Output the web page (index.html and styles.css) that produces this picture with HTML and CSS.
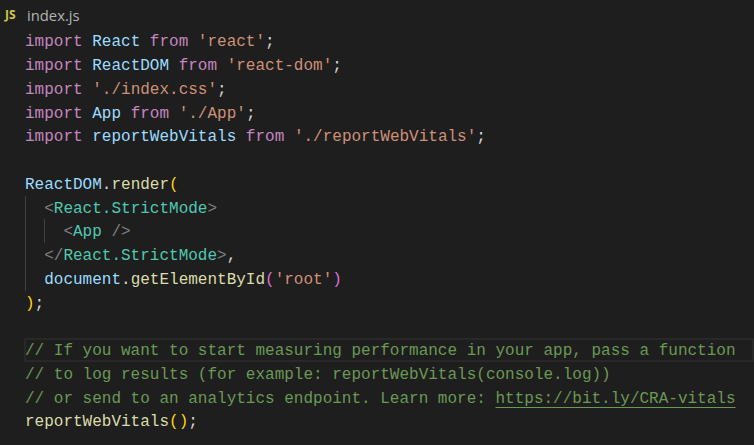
FILE: index.html
```html
<!DOCTYPE html>
<html lang="en">
<head>
<meta charset="utf-8">
<title>index.js</title>
<link rel="stylesheet" href="styles.css">
</head>
<body>
<div class="editor">
  <div class="tab"><span class="js">JS</span><span class="name">index.js</span></div>
  <div class="code">
    <div class="line"><span class="k">import</span> <span class="v">React</span> <span class="k">from</span> <span class="s">'react'</span><span class="p">;</span></div>
    <div class="line"><span class="k">import</span> <span class="v">ReactDOM</span> <span class="k">from</span> <span class="s">'react-dom'</span><span class="p">;</span></div>
    <div class="line"><span class="k">import</span> <span class="s">'./index.css'</span><span class="p">;</span></div>
    <div class="line"><span class="k">import</span> <span class="v">App</span> <span class="k">from</span> <span class="s">'./App'</span><span class="p">;</span></div>
    <div class="line"><span class="k">import</span> <span class="v">reportWebVitals</span> <span class="k">from</span> <span class="s">'./reportWebVitals'</span><span class="p">;</span></div>
    <div class="line"></div>
    <div class="line"><span class="v">ReactDOM</span><span class="p">.</span><span class="f">render</span><span class="y">(</span></div>
    <div class="line indent1">  <span class="g">&lt;</span><span class="t">React.StrictMode</span><span class="g">&gt;</span></div>
    <div class="line indent2">    <span class="g">&lt;</span><span class="t">App</span> <span class="g">/&gt;</span></div>
    <div class="line indent1">  <span class="g">&lt;/</span><span class="t">React.StrictMode</span><span class="g">&gt;</span><span class="p">,</span></div>
    <div class="line indent1">  <span class="v">document</span><span class="p">.</span><span class="f">getElementById</span><span class="m">(</span><span class="s">'root'</span><span class="m">)</span></div>
    <div class="line"><span class="y">)</span><span class="p">;</span></div>
    <div class="line"></div>
    <div class="line current"><span class="c">// If you want to start measuring performance in your app, pass a function</span></div>
    <div class="line"><span class="c">// to log results (for example: reportWebVitals(console.log))</span></div>
    <div class="line"><span class="c">// or send to an analytics endpoint. Learn more: <span class="link">https://bit.ly/CRA-vitals</span></span></div>
    <div class="line"><span class="f">reportWebVitals</span><span class="y">()</span><span class="p">;</span></div>
  </div>
</div>
</body>
</html>
```
FILE: styles.css
```css
html, body {
  margin: 0;
  padding: 0;
  background: #1e1e1e;
}
.editor {
  width: 754px;
  height: 445px;
  overflow: hidden;
  background: #1e1e1e;
}
.tab {
  display: flex;
  align-items: center;
  height: 29.25px;
  padding-left: 5px;
  box-sizing: border-box;
  font-family: "Open Sans", "Noto Sans", sans-serif;
  font-size: 14.8px;
}
.js {
  color: #cbcb41;
  font-weight: 700;
  font-size: 12px;
  width: 22px;
}
.name {
  color: #b4b4b4;
}
.code {
  padding-left: 25px;
  font-family: "Liberation Mono", monospace;
  font-size: 16px;
  line-height: 23.75px;
}
.line {
  box-sizing: border-box;
  height: 23.75px;
  padding-top: 2px;
  color: #d4d4d4;
  white-space: pre;
}
.indent1 {
  background: linear-gradient(#404040, #404040) 0 0 / 1px 100% no-repeat;
}
.indent2 {
  background:
    linear-gradient(#404040, #404040) 0 0 / 1px 100% no-repeat,
    linear-gradient(#404040, #404040) 19px 0 / 1px 100% no-repeat;
}
.current {
  margin-left: -1px;
  padding-left: 1px;
  box-shadow: inset 0 0 0 2px #282828;
}
.k { color: #c586c0; }
.v { color: #9cdcfe; }
.s { color: #ce9178; }
.p { color: #d4d4d4; }
.f { color: #dcdcaa; }
.y { color: #ffd700; }
.m { color: #da70d6; }
.t { color: #4ec9b0; }
.g { color: #808080; }
.c { color: #6a9955; }
.link {
  text-decoration: underline;
  text-underline-offset: 4px;
}
```
